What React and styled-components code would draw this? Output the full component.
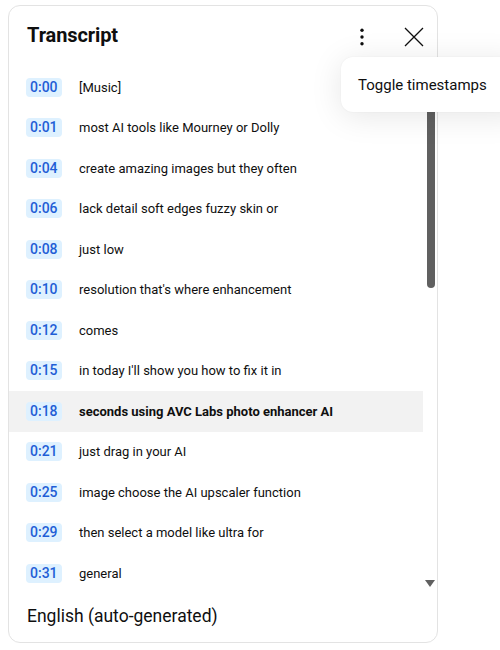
import styled, { createGlobalStyle } from "styled-components";

const GlobalStyle = createGlobalStyle`
  html, body {
    margin: 0;
    padding: 0;
    background: #ffffff;
    overflow: hidden;
  }
  body {
    font-family: "Roboto", "Liberation Sans", sans-serif;
    color: #0f0f0f;
  }
`;

const segments = [
  { time: "0:00", text: "[Music]" },
  { time: "0:01", text: "most AI tools like Mourney or Dolly" },
  { time: "0:04", text: "create amazing images but they often" },
  { time: "0:06", text: "lack detail soft edges fuzzy skin or" },
  { time: "0:08", text: "just low" },
  { time: "0:10", text: "resolution that's where enhancement" },
  { time: "0:12", text: "comes" },
  { time: "0:15", text: "in today I'll show you how to fix it in" },
  { time: "0:18", text: "seconds using AVC Labs photo enhancer AI", active: true },
  { time: "0:21", text: "just drag in your AI" },
  { time: "0:25", text: "image choose the AI upscaler function" },
  { time: "0:29", text: "then select a model like ultra for" },
  { time: "0:31", text: "general" },
];

const Page = styled.div`
  position: relative;
  width: 500px;
  height: 650px;
  padding: 5px 0 0 8px;
  box-sizing: border-box;
  overflow: hidden;
`;

const Panel = styled.section`
  width: 430px;
  height: 638px;
  box-sizing: border-box;
  border: 1px solid #e3e3e3;
  border-radius: 12px;
  background: #fff;
  display: flex;
  flex-direction: column;
  overflow: hidden;
`;

const Header = styled.header`
  height: 61px;
  flex-shrink: 0;
  display: flex;
  align-items: center;
  padding: 0 5px 0 18px;
`;

const Title = styled.h2`
  flex: 1;
  margin: 0;
  font-size: 20px;
  font-weight: 700;
  letter-spacing: -0.1px;
  padding-bottom: 3px;
`;

const IconButton = styled.button`
  width: 36px;
  height: 36px;
  border: none;
  background: transparent;
  padding: 0;
  display: flex;
  align-items: center;
  justify-content: center;
  color: #0f0f0f;
  margin-left: ${({ $gap }) => $gap || 0}px;
  cursor: pointer;
`;

const Body = styled.div`
  flex: 1;
  display: flex;
  min-height: 0;
`;

const List = styled.ul`
  flex: 1;
  margin: 0;
  padding: 0;
  list-style: none;
  overflow: hidden;
`;

const Row = styled.li`
  height: 40.5px;
  display: flex;
  align-items: center;
  padding-left: 17px;
  background: ${({ $active }) => ($active ? "#f2f2f2" : "transparent")};
`;

const Stamp = styled.span`
  flex-shrink: 0;
  width: 36px;
  box-sizing: border-box;
  height: 19px;
  line-height: 19px;
  padding-left: 4px;
  border-radius: 4px;
  background: #def1ff;
  color: #1f5ed6;
  font-size: 14px;
  font-weight: 500;
`;

const Line = styled.span`
  margin-left: 17px;
  font-size: 13px;
  font-weight: ${({ $active }) => ($active ? 700 : 400)};
  white-space: nowrap;
`;

const ScrollTrack = styled.div`
  width: 14px;
  flex-shrink: 0;
  display: flex;
  flex-direction: column;
  align-items: center;
  padding-bottom: 2px;
`;

const ArrowButton = styled.div`
  height: 14px;
  width: 14px;
  display: flex;
  align-items: center;
  justify-content: center;
`;

const Thumb = styled.div`
  width: 8px;
  height: 207px;
  margin-left: 2px;
  border-radius: 4px;
  background: #606060;
`;

const Spacer = styled.div`
  flex: 1;
`;

const Footer = styled.footer`
  height: 48px;
  flex-shrink: 0;
  display: flex;
  align-items: center;
  padding-left: 18px;
  font-size: 17.5px;
  padding-bottom: 2px;
`;

const Menu = styled.div`
  position: absolute;
  left: 341px;
  top: 57px;
  width: 185px;
  height: 55px;
  box-sizing: border-box;
  padding-left: 17px;
  display: flex;
  align-items: center;
  background: #fff;
  border-radius: 12px;
  box-shadow: 0 4px 32px rgba(0, 0, 0, 0.1), 0 0 2px rgba(0, 0, 0, 0.06);
  font-size: 15px;
  color: #0f0f0f;
`;

const Kebab = () => (
  <svg width="24" height="24" viewBox="0 0 24 24">
    <circle cx="12" cy="5.3" r="1.7" fill="currentColor" />
    <circle cx="12" cy="12" r="1.7" fill="currentColor" />
    <circle cx="12" cy="18.7" r="1.7" fill="currentColor" />
  </svg>
);

const Close = () => (
  <svg width="24" height="24" viewBox="0 0 24 24">
    <path d="M3 3 L21 21 M21 3 L3 21" stroke="currentColor" strokeWidth="1.3" fill="none" />
  </svg>
);

const Triangle = ({ up }) => (
  <svg width="10" height="7" viewBox="0 0 10 7">
    <path d={up ? "M0 7 L10 7 L5 0 Z" : "M0 0 L10 0 L5 7 Z"} fill="#606060" />
  </svg>
);

const App = () => {
  return (
    <Page>
      <GlobalStyle />
      <Panel>
        <Header>
          <Title>Transcript</Title>
          <IconButton aria-label="More actions">
            <Kebab />
          </IconButton>
          <IconButton $gap={16} aria-label="Close transcript">
            <Close />
          </IconButton>
        </Header>
        <Body>
          <List>
            {segments.map((s) => (
              <Row key={s.time} $active={s.active}>
                <Stamp>{s.time}</Stamp>
                <Line $active={s.active}>{s.text}</Line>
              </Row>
            ))}
          </List>
          <ScrollTrack>
            <ArrowButton>
              <Triangle up />
            </ArrowButton>
            <Thumb />
            <Spacer />
            <ArrowButton>
              <Triangle />
            </ArrowButton>
          </ScrollTrack>
        </Body>
        <Footer>English (auto-generated)</Footer>
      </Panel>
      <Menu>Toggle timestamps</Menu>
    </Page>
  );
};

export default App;
